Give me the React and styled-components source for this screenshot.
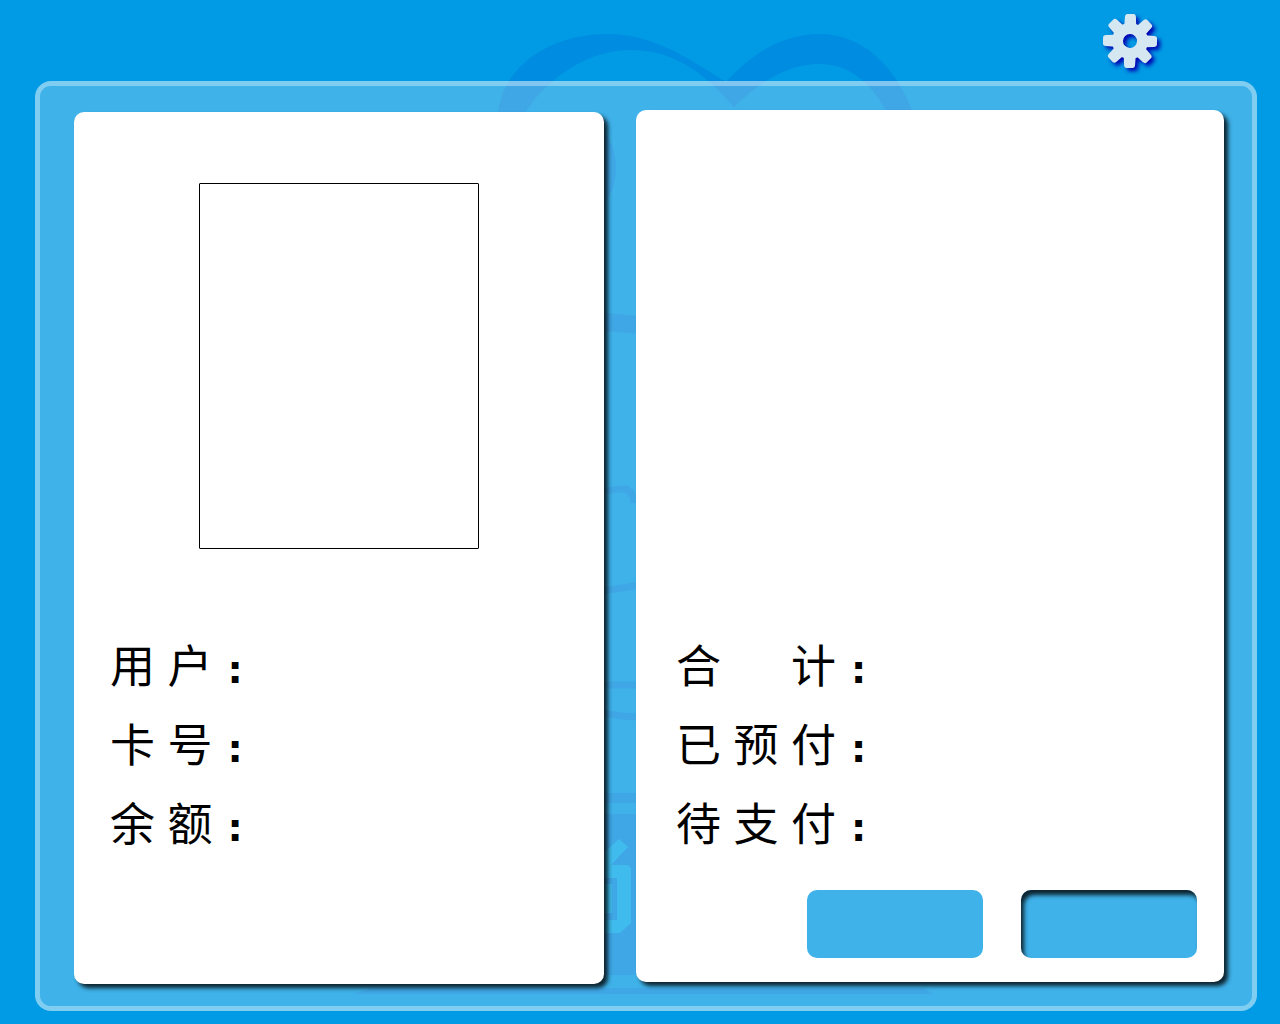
import React from "react";
import styled, { createGlobalStyle } from "styled-components";

const GlobalStyle = createGlobalStyle`
  * { box-sizing: border-box; }
  body { margin: 0; background: #009be4; }
`;

const Page = styled.div`
  position: relative;
  z-index: 0;
  display: flex;
  flex-direction: column;
  min-height: 100vh;
  padding: 0 23px 13px 35px;
  overflow: hidden;
  background: #009be4;
  font-family: "Liberation Sans", "Noto Sans CJK SC", sans-serif;
  color: #000;
`;

const Watermark = styled.svg`
  position: absolute;
  z-index: -1;
  top: 0;
  left: 50%;
  width: 1280px;
  height: 1024px;
  transform: translateX(-50%);
`;

const Header = styled.header`
  display: flex;
  justify-content: flex-end;
  align-items: flex-start;
  height: 81px;
  padding: 13px 99px 0 0;
`;

const SettingsButton = styled.button`
  display: block;
  width: 56px;
  height: 56px;
  padding: 0;
  border: 0;
  background: none;
  cursor: pointer;

  svg {
    display: block;
    overflow: visible;
    filter: drop-shadow(3px 3px 2px #0000b0);
  }
`;

const Frame = styled.main`
  display: grid;
  grid-template-columns: 530fr 588fr;
  flex: 1;
  gap: 32px;
  padding: 24px 28px 22px 34px;
  border: 5px solid rgba(255, 255, 255, 0.5);
  border-radius: 16px;
  background: rgba(252, 247, 248, 0.25) padding-box;
`;

const Card = styled.section`
  display: flex;
  flex-direction: column;
  justify-content: flex-end;
  min-width: 0;
  border-radius: 10px;
  background: #fff;
  box-shadow: 4px 4px 4px rgba(0, 0, 0, 0.8);
`;

const UserCard = styled(Card)`
  margin-top: 2px;
  padding: 71px 36px 118px;
`;

const PaymentCard = styled(Card)`
  margin-bottom: 2px;
  padding: 24px 27px 24px 40px;
`;

const Photo = styled.div`
  width: 280px;
  height: 366px;
  margin: 0 auto auto;
  border: 1px solid #000;
  border-radius: 1px;
`;

const Fields = styled.dl`
  margin: 0;
`;

const Field = styled.div`
  display: flex;
  align-items: center;
  height: 79px;
  font-size: 45px;
  line-height: 79px;
`;

const Term = styled.dt`
  white-space: pre;
`;

const Colon = styled.span`
  padding-left: 15px;
  font-family: "DejaVu Sans", sans-serif;
  font-size: 38px;
  font-weight: 700;
`;

const Value = styled.dd`
  flex: 1;
  margin: 0;
`;

const Actions = styled.div`
  display: flex;
  justify-content: flex-end;
  gap: 38px;
  padding-top: 24px;
`;

const ActionButton = styled.button`
  width: 176px;
  height: 68px;
  border: 0;
  border-radius: 10px;
  background: #3fb2e9;
  box-shadow: ${(p) => (p.$pressed ? "inset 3px 5px 4px rgba(0, 0, 0, 0.8)" : "none")};
  cursor: pointer;
`;

const teeth = [0, 45, 90, 135, 180, 225, 270, 315];

function Gear() {
  return (
    <svg width="56" height="56" viewBox="-28 -28 56 56" aria-hidden="true">
      <g fill="#d5e8f1" transform="rotate(1)">
        <path
          fillRule="evenodd"
          d="M0-18a18 18 0 1 1 0 36a18 18 0 1 1 0-36M0-7a7 7 0 1 0 0 14a7 7 0 1 0 0-14"
        />
        {teeth.map((angle) => (
          <path
            key={angle}
            transform={`rotate(${angle})`}
            d="M-6-15L-5.500-24Q-5.300-27-3-27H3Q5.300-27 5.500-24L6-15Z"
          />
        ))}
      </g>
    </svg>
  );
}

function BackgroundArt() {
  return (
    <Watermark viewBox="0 0 1280 1024" aria-hidden="true">
      <g fill="#008ce0">
        <path d="M498 115C502 66 550 34 608 34C655 34 690 60 726 82C752 53 783 34 820 34C862 34 896 66 914 115H888C873 84 850 64 820 64C786 64 759 83 734 107C709 80 681 50 630 50C582 50 540 86 524 115Z" />
        <ellipse cx="590" cy="168" rx="26" ry="42" />
        <path d="M560 310Q600 312 660 318V336Q610 330 560 330Z" />
        <path d="M590 814H660V975H590Z" />
        <path d="M560 793H700V803H560Z" />
        <path d="M372 988H924L933 994H353Z" />
      </g>
      <g fill="none" stroke="#008ce0" strokeWidth="7">
        <path d="M590 495Q618 488 625 489Q633 491 634 503" />
        <path d="M580 592Q612 591 650 583" />
        <path d="M580 685H660" />
        <path d="M580 715Q600 712 615 715T660 716" />
      </g>
      <g fill="#00a8ea">
        <path d="M600 856L619 839L628 847L611 865H628L631 868V923L620 933H600V920H617V878H600Z" />
        <path d="M600 884H612V913H600Z" />
      </g>
    </Watermark>
  );
}

function LabelRow({ label }) {
  return (
    <Field>
      <Term>
        {label}
        <Colon>:</Colon>
      </Term>
      <Value />
    </Field>
  );
}

export default function App() {
  return (
    <>
      <GlobalStyle />
      <Page>
        <BackgroundArt />
        <Header>
          <SettingsButton type="button" aria-label="设置">
            <Gear />
          </SettingsButton>
        </Header>
        <Frame>
          <UserCard>
            <Photo />
            <Fields>
              <LabelRow label="用 户" />
              <LabelRow label="卡 号" />
              <LabelRow label="余 额" />
            </Fields>
          </UserCard>
          <PaymentCard>
            <Fields>
              <LabelRow label={"合 \u3000 计"} />
              <LabelRow label="已 预 付" />
              <LabelRow label="待 支 付" />
            </Fields>
            <Actions>
              <ActionButton type="button" aria-label="支付" />
              <ActionButton type="button" aria-label="取消" $pressed />
            </Actions>
          </PaymentCard>
        </Frame>
      </Page>
    </>
  );
}
